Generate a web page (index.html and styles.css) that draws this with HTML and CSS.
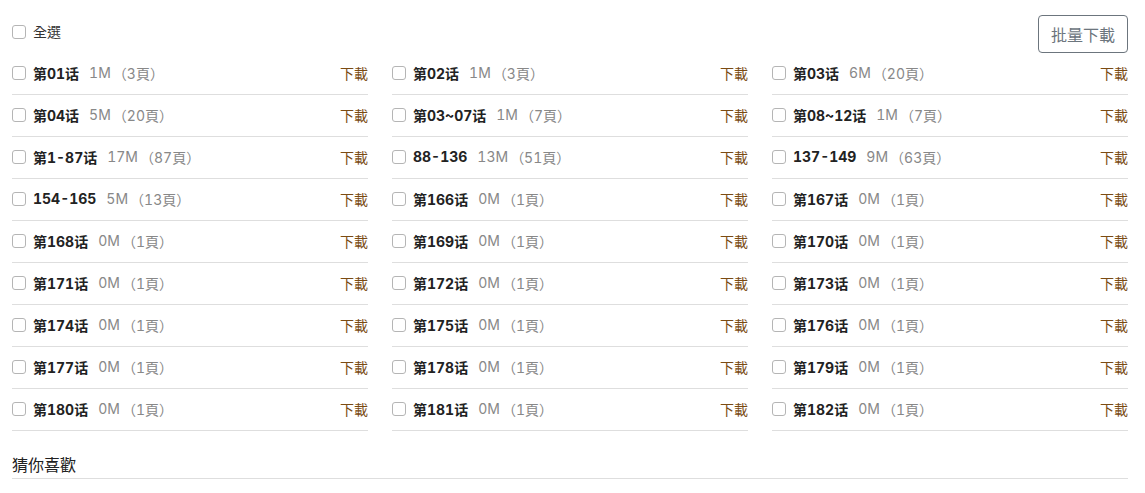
FILE: index.html
```html
<!DOCTYPE html>
<html lang="zh-Hant">
<head>
<meta charset="utf-8">
<link rel="stylesheet" href="styles.css">
</head>
<body>
<div class="page">
  <div class="top">
    <label class="all"><span class="cb"></span>全選</label>
    <button class="batch">批量下載</button>
  </div>
  <div class="grid" id="grid"></div>
  <h3 class="guess">猜你喜歡</h3>
</div>
<script src="app.js"></script>
</body>
</html>
```
FILE: app.js
```js
var items = [
 ["第01话","1M","3"],["第02话","1M","3"],["第03话","6M","20"],
 ["第04话","5M","20"],["第03~07话","1M","7"],["第08~12话","1M","7"],
 ["第1-87话","17M","87"],["88-136","13M","51"],["137-149","9M","63"],
 ["154-165","5M","13"],["第166话","0M","1"],["第167话","0M","1"],
 ["第168话","0M","1"],["第169话","0M","1"],["第170话","0M","1"],
 ["第171话","0M","1"],["第172话","0M","1"],["第173话","0M","1"],
 ["第174话","0M","1"],["第175话","0M","1"],["第176话","0M","1"],
 ["第177话","0M","1"],["第178话","0M","1"],["第179话","0M","1"],
 ["第180话","0M","1"],["第181话","0M","1"],["第182话","0M","1"]
];
var g = document.getElementById("grid");
var h = "";
items.forEach(function(it){
  h += '<div class="row"><span class="cb"></span><b class="name">'+it[0]+'</b><span class="size">'+it[1]+'</span><span class="pages">（'+it[2]+'頁）</span><a class="dl">下載</a></div>';
});
g.innerHTML = h;
```
FILE: styles.css
```css
* { box-sizing: border-box; }
body { margin: 0; background: #fff; font-family: "Inter", "Noto Sans CJK TC", sans-serif; font-variant-numeric: tabular-nums; color: #333; font-size: 14px; }
.page { padding: 0 17px 0 12px; }
.top { display: flex; justify-content: space-between; align-items: flex-start; padding-top: 15px; height: 53px; }
.all { display: flex; align-items: center; line-height: 20px; height: 20px; margin-top: 7px; font-size: 14px; color: #333; }
.cb { width: 14px; height: 14px; border: 1px solid #b5b5b5; border-radius: 3px; margin-right: 7px; flex: none; background: #fff; }
.batch { height: 38px; width: 90px; border: 1px solid #6c757d; border-radius: 4px; background: #fff; color: #6c757d; font-family: inherit; font-size: 16px; padding: 0; }
.grid { display: grid; grid-template-columns: repeat(3, 1fr); column-gap: 24px; }
.row { display: flex; align-items: center; height: 42px; padding-bottom: 2px; border-bottom: 1px solid #dedede; }
.name { font-weight: 700; color: #222; margin-right: 10px; }
.size { color: #888; }
.pages { color: #888; margin-left: 2px; }
.dl { margin-left: auto; color: #7a4b13; }
.guess { margin: 22px 0 0; font-weight: 400; font-size: 16px; line-height: 24px; padding-bottom: 1px; border-bottom: 1px solid #dedede; color: #222; }
```
